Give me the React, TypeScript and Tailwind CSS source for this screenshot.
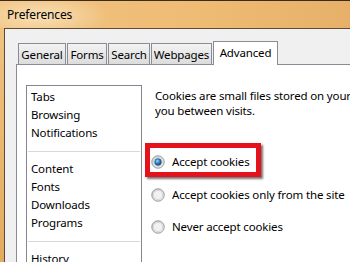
import React from 'react';

const tabs = [
  { label: 'General', w: 'w-[48px]' },
  { label: 'Forms', w: 'w-[40px]' },
  { label: 'Search', w: 'w-[42px]' },
  { label: 'Webpages', w: 'w-[61px]' },
];

const Radio: React.FC<{ checked?: boolean; id: string }> = ({ checked, id }) => (
  <svg width="14" height="14" viewBox="0 0 14 14" className="shrink-0">
    <defs>
      <linearGradient id={`ring-${id}`} x1="0" y1="0" x2="1" y2="1">
        <stop offset="0" stopColor="#d6d6d6" />
        <stop offset="1" stopColor="#fbfbfb" />
      </linearGradient>
      <radialGradient id={`dot-${id}`} cx="0.4" cy="0.35" r="0.7">
        <stop offset="0" stopColor="#9ed8f8" />
        <stop offset="0.5" stopColor="#2f7fc4" />
        <stop offset="1" stopColor="#123c6e" />
      </radialGradient>
    </defs>
    <circle cx="7" cy="7" r="6.2" fill={`url(#ring-${id})`} stroke="#8a8a8a" strokeWidth="0.9" />
    <circle cx="7" cy="7" r="4.6" fill="#f2f2f2" stroke="#c8c8c8" strokeWidth="0.6" />
    {checked && <circle cx="7" cy="7" r="3.4" fill={`url(#dot-${id})`} stroke="#1f4f86" strokeWidth="0.5" />}
  </svg>
);

const Item: React.FC<{ label: string }> = ({ label }) => (
  <div className="h-[18px] leading-[18px] pl-[4px] text-black whitespace-nowrap">{label}</div>
);

const Sep = () => <div className="h-px bg-[#d8d8d8] mx-px my-[8px] mt-[9px]" />;

export default function App() {
  return (
    <div className="relative w-[350px] h-[262px] overflow-hidden flex flex-col bg-gradient-to-b from-[#f0c584] to-[#e3ab5e] text-[11.5px] tracking-[-0.15px] text-black font-['Segoe_UI','Noto_Sans',sans-serif]">
      {/* Title bar */}
      <div className="h-[28px] shrink-0 border-t border-[#3a2b1d] flex items-center pl-[7px] bg-[radial-gradient(ellipse_70px_22px_at_40px_15px,#f8e0b8_0%,rgba(248,224,184,0)_100%),linear-gradient(to_right,#f1c27f,#eebb73_60%,#e6b068)]">
        <span className="leading-none text-[12px]">Preferences</span>
      </div>

      <div className="flex flex-1 min-h-0">
        <div className="w-[4px] shrink-0" />
        {/* Client area */}
        <div className="flex-1 flex flex-col bg-[#f0f0f0] border-t border-l border-[#5e4a35] pl-[11px] pt-[12px] min-w-0">
          {/* Tab row */}
          <div className="flex items-end h-[23px] pl-[2px] gap-[1px] shrink-0">
            {tabs.map((t) => (
              <div
                key={t.label}
                className={`${t.w} h-[21px] border-l border-t border-r border-[#898c95] bg-gradient-to-b from-[#f3f3f3] to-[#dcdcdc] flex items-center justify-center pt-[1px] shrink-0`}
              >
                {t.label}
              </div>
            ))}
            <div className="relative z-10 w-[65px] h-[24px] -mb-px border-l border-t border-r border-[#898c95] bg-white flex items-center justify-center pb-[2px] shrink-0">
              Advanced
            </div>
          </div>

          {/* Panel */}
          <div className="flex-1 bg-white border-t border-l border-[#898c95] pl-[9px] pt-[20px] flex min-w-0">
            <div className="w-[116px] h-[200px] shrink-0 border border-[#828790] bg-white pt-[2px]">
              <Item label="Tabs" />
              <Item label="Browsing" />
              <Item label="Notifications" />
              <Sep />
              <Item label="Content" />
              <Item label="Fonts" />
              <Item label="Downloads" />
              <Item label="Programs" />
              <Sep />
              <Item label="History" />
            </div>

            <div className="ml-[9px] pt-[3px] min-w-0">
              <p className="pl-[4px] leading-[15px] whitespace-nowrap">
                Cookies are small files stored on your
                <br />
                you between visits.
              </p>
              <div className="mt-[36px] flex flex-col">
                <label className="h-[16px] flex items-center whitespace-nowrap">
                  <Radio checked id="a" />
                  <span className="ml-[7px]">Accept cookies</span>
                </label>
                <label className="h-[16px] mt-[17px] flex items-center whitespace-nowrap">
                  <Radio id="b" />
                  <span className="ml-[7px]">Accept cookies only from the site</span>
                </label>
                <label className="h-[16px] mt-[16px] flex items-center whitespace-nowrap">
                  <Radio id="c" />
                  <span className="ml-[7px]">Never accept cookies</span>
                </label>
              </div>
            </div>
          </div>
        </div>
      </div>

      {/* Annotation highlight */}
      <div className="absolute left-[145px] top-[143px] w-[116px] h-[34px] border-[5px] border-[#e5121c] shadow-[2px_2px_2px_rgba(0,0,0,0.55)] pointer-events-none" />
    </div>
  );
}
